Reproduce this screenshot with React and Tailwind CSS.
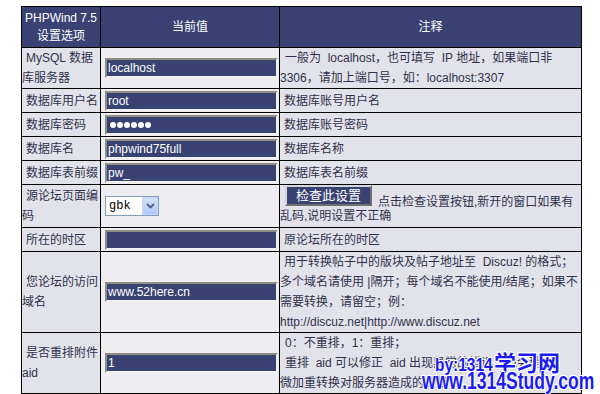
import React from "react";

function Field({ children }) {
  return (
    <div className="ml-[4px] w-[173px] h-[20px] bg-[#394272] border-2 border-t-[#8e8e82] border-l-[#8e8e82] border-r-[#f2f2f2] border-b-[#f2f2f2] flex items-center pl-px text-white text-[12px] leading-[16px] whitespace-nowrap">
      {children}
    </div>
  );
}

function Label({ children, className = "" }) {
  return (
    <div className={"bg-[#e2e2ea] flex flex-col justify-center leading-[20px] " + className}>
      {children}
    </div>
  );
}

function Mid({ children }) {
  return <div className="bg-[#ededf2] flex items-center">{children}</div>;
}

function Note({ children, className = "" }) {
  return (
    <div className={"bg-[#e2e2ea] flex flex-col justify-center leading-[20px] whitespace-nowrap " + className}>
      {children}
    </div>
  );
}

export default function App() {
  return (
    <div className="relative w-[600px] h-[394px] bg-white overflow-hidden font-['Liberation_Sans','Noto_Sans_CJK_SC',sans-serif] text-[12px] text-[#30324c]">
      <div className="ml-[21px] mt-[6px] w-[561px] grid grid-cols-[78px_178px_301px] grid-rows-[40px_40px_23px_23px_23px_23px_42px_23px_80px_60px] gap-px p-px bg-black">
        {/* header */}
        <div className="bg-[#394272] text-white flex flex-col items-center justify-center leading-[18px]">
          <span>PHPWind 7.5</span>
          <span>设置选项</span>
        </div>
        <div className="bg-[#394272] text-white flex items-center justify-center">当前值</div>
        <div className="bg-[#394272] text-white flex items-center justify-center">注释</div>

        {/* row 1 */}
        <Label>
          <span className="pl-[4px]">MySQL 数据</span>
          <span>库服务器</span>
        </Label>
        <Mid><Field>localhost</Field></Mid>
        <Note>
          <span className="pl-[5px]">一般为&nbsp; localhost，也可填写&nbsp; IP 地址，如果端口非</span>
          <span>3306，请加上端口号，如：localhost:3307</span>
        </Note>

        {/* row 2 */}
        <Label><span className="pl-[4px]">数据库用户名</span></Label>
        <Mid><Field>root</Field></Mid>
        <Note><span className="pl-[4px]">数据库账号用户名</span></Note>

        {/* row 3 */}
        <Label><span className="pl-[4px]">数据库密码</span></Label>
        <Mid>
          <Field>
            <span className="flex gap-px pl-[2px]">
              <span className="w-[6px] h-[6px] rounded-full bg-white" />
              <span className="w-[6px] h-[6px] rounded-full bg-white" />
              <span className="w-[6px] h-[6px] rounded-full bg-white" />
              <span className="w-[6px] h-[6px] rounded-full bg-white" />
              <span className="w-[6px] h-[6px] rounded-full bg-white" />
              <span className="w-[6px] h-[6px] rounded-full bg-white" />
            </span>
          </Field>
        </Mid>
        <Note><span className="pl-[4px]">数据库账号密码</span></Note>

        {/* row 4 */}
        <Label><span className="pl-[4px]">数据库名</span></Label>
        <Mid><Field>phpwind75full</Field></Mid>
        <Note><span className="pl-[4px]">数据库名称</span></Note>

        {/* row 5 */}
        <Label><span className="pl-[4px]">数据库表前缀</span></Label>
        <Mid><Field>pw_</Field></Mid>
        <Note><span className="pl-[4px]">数据库表名前缀</span></Note>

        {/* row 6 */}
        <Label>
          <span className="pl-[4px]">源论坛页面编</span>
          <span>码</span>
        </Label>
        <Mid>
          <div className="ml-[4px] w-[54px] h-[20px] bg-white border border-[#7f9db9] flex items-center justify-between">
            <span className="pl-[3px] font-['Liberation_Mono',monospace] text-[12px] leading-[14px] text-black">gbk</span>
            <span className="w-[16px] h-[18px] bg-gradient-to-b from-[#d3e0fd] to-[#b4c8f6] border border-[#c7d6fb] flex items-center justify-center">
              <svg width="9" height="6" viewBox="0 0 9 6">
                <path d="M1 1 L4.5 4.5 L8 1" stroke="#4d6185" strokeWidth="1.8" fill="none" />
              </svg>
            </span>
          </div>
        </Mid>
        <Note className="justify-start">
          <div className="h-[21px] flex items-start">
            <div className="ml-[5px] w-[87px] h-[21px] bg-[#394272] border-2 border-t-[#d8d8d8] border-l-[#d8d8d8] border-r-[#6f6f6f] border-b-[#6f6f6f] text-white text-[13px] leading-[15px] flex justify-center pt-px">
              检查此设置
            </div>
            <span className="ml-[6px] mt-[7px] leading-[20px] h-[20px]">点击检查设置按钮,新开的窗口如果有</span>
          </div>
          <span>乱码,说明设置不正确</span>
        </Note>

        {/* row 7 */}
        <Label><span className="pl-[4px]">所在的时区</span></Label>
        <Mid><Field>{""}</Field></Mid>
        <Note><span className="pl-[4px]">原论坛所在的时区</span></Note>

        {/* row 8 */}
        <Label>
          <span className="pl-[4px]">您论坛的访问</span>
          <span>域名</span>
        </Label>
        <Mid><Field>www.52here.cn</Field></Mid>
        <Note>
          <span className="pl-[4px]">用于转换帖子中的版块及帖子地址至&nbsp; Discuz! 的格式；</span>
          <span>多个域名请使用 |隔开；每个域名不能使用/结尾；如果不</span>
          <span>需要转换，请留空；例：</span>
          <span>http://discuz.net|http://www.discuz.net</span>
        </Note>

        {/* row 9 */}
        <Label>
          <span className="pl-[4px]">是否重排附件</span>
          <span>aid</span>
        </Label>
        <Mid><Field>1</Field></Mid>
        <Note>
          <span className="pl-[5px]">0：不重排，1：重排；</span>
          <span className="pl-[5px]">重排&nbsp; aid 可以修正&nbsp; aid 出现异常的错误，但会稍</span>
          <span>微加重转换对服务器造成的负担</span>
        </Note>
      </div>

      {/* watermark */}
      <div className="absolute left-[422px] top-[352px] w-[176px] font-bold text-[#1c1cf2] [text-shadow:1px_1px_0_#fff,-1px_-1px_0_#fff,1px_-1px_0_#fff,-1px_1px_0_#fff,0_1px_0_#fff,0_-1px_0_#fff]">
        <div className="ml-[13px] h-[18px] flex items-baseline whitespace-nowrap leading-[18px]">
          <span className="text-[18px] font-['Liberation_Sans',sans-serif] scale-x-[0.86] origin-left inline-block w-[59px]">by:1314</span>
          <span className="text-[22px] font-['Noto_Sans_CJK_SC',sans-serif]">学习网</span>
        </div>
        <div className="whitespace-nowrap text-[24px] leading-[22px] font-['Liberation_Sans',sans-serif] scale-x-[0.73] origin-left">www.1314Study.com</div>
      </div>
    </div>
  );
}
